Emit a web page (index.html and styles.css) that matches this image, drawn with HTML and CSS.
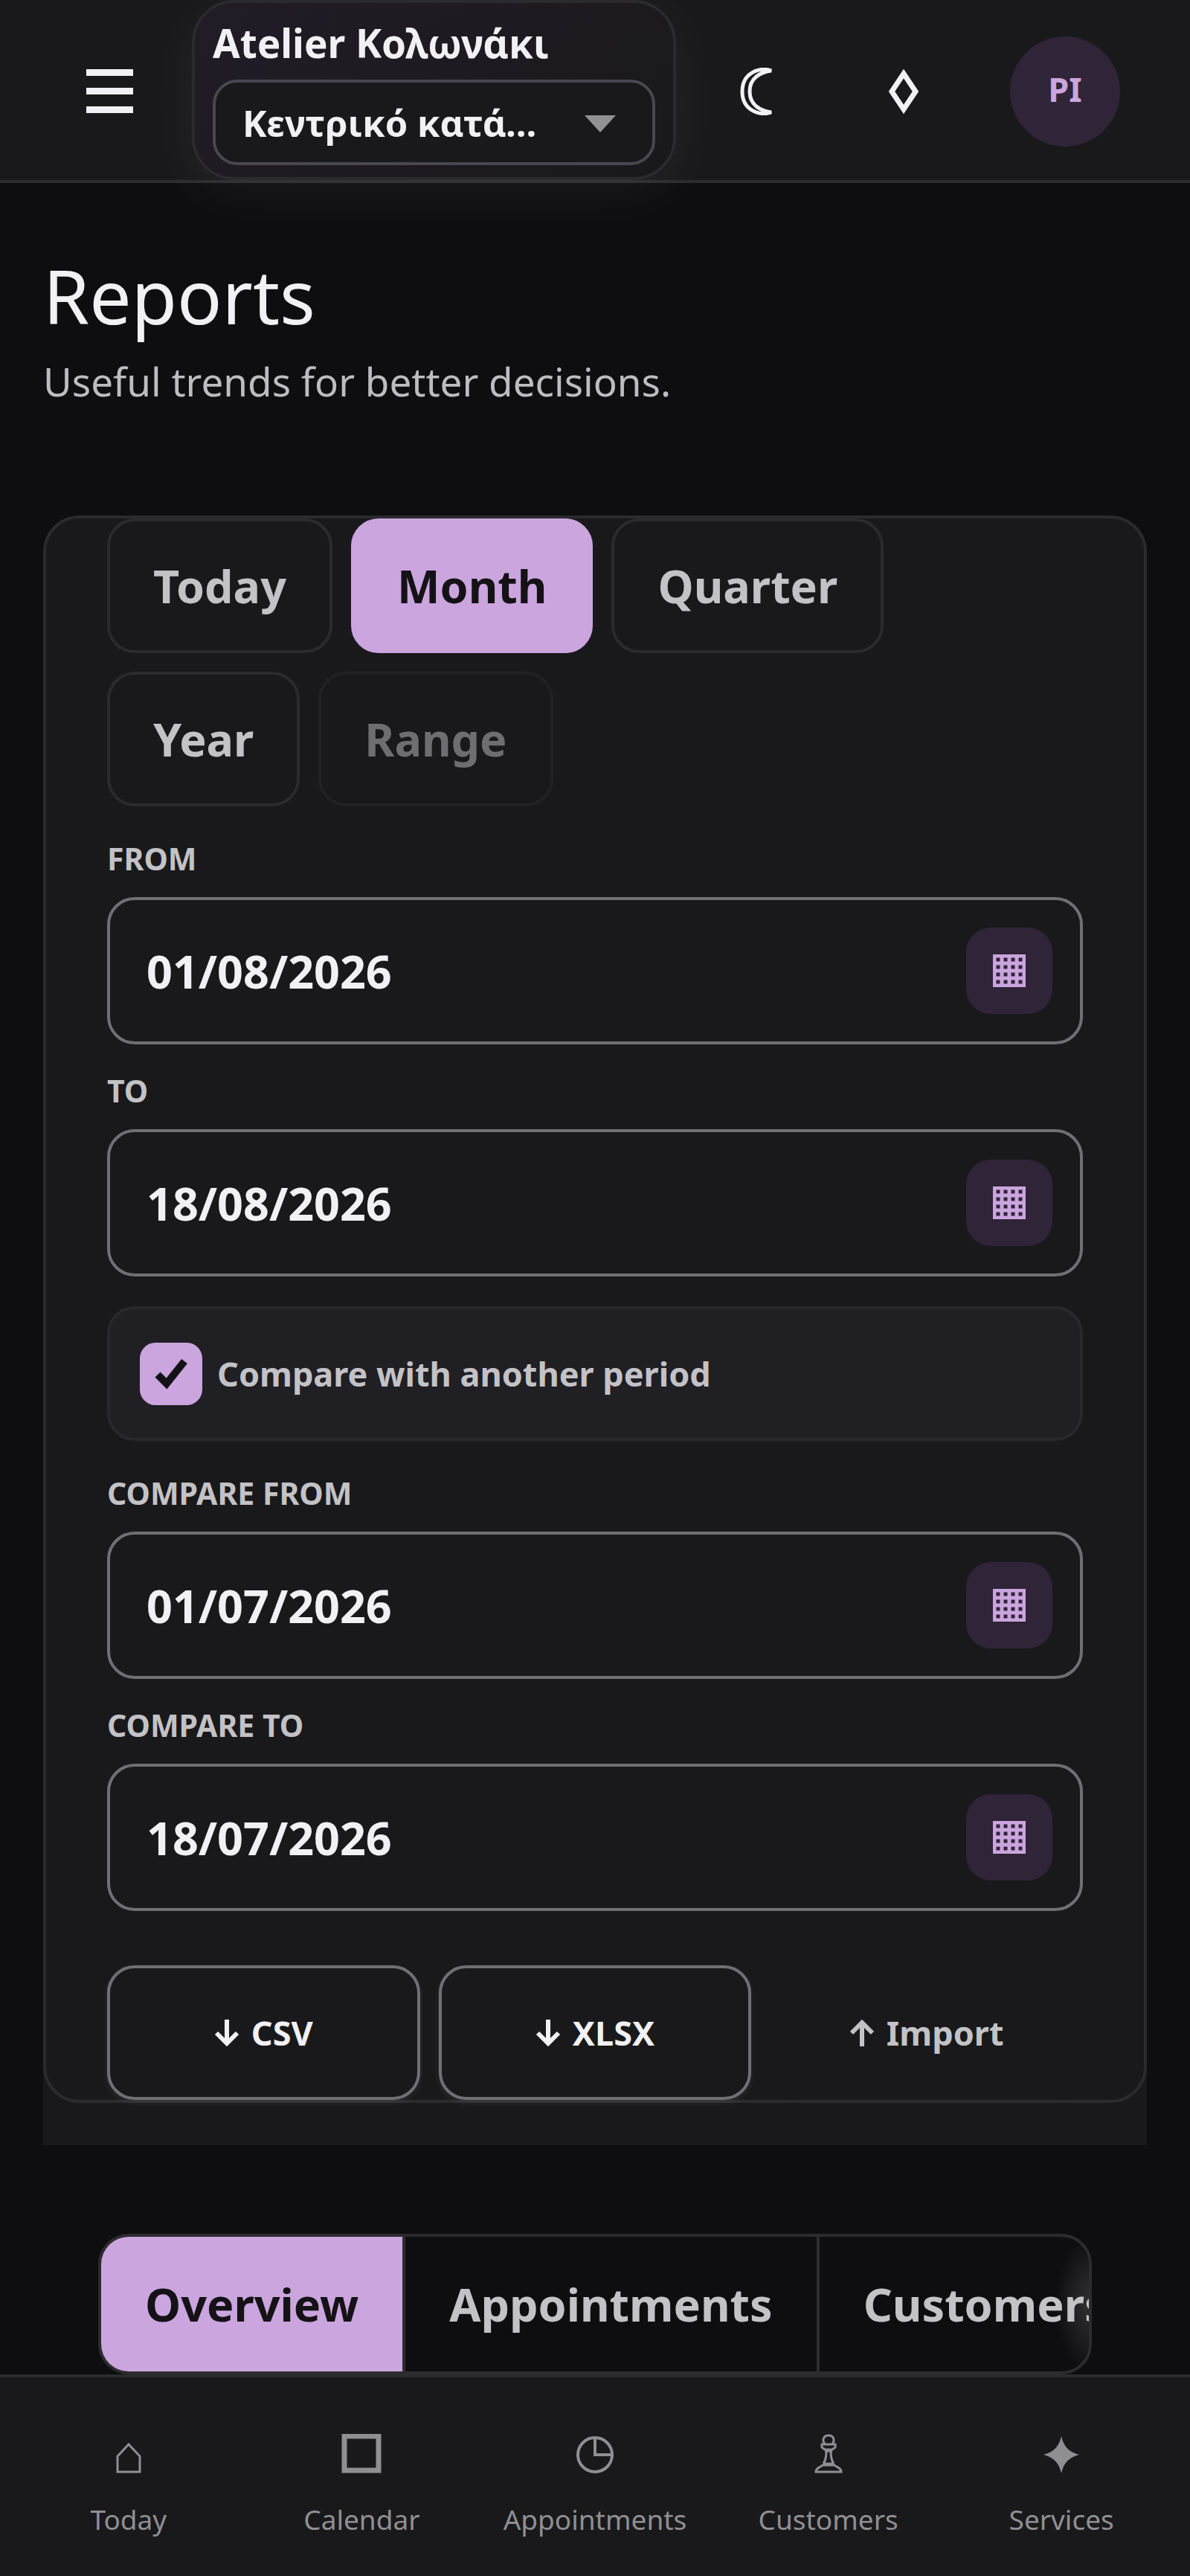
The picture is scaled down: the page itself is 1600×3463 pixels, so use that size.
FILE: index.html
```html
<!DOCTYPE html>
<html lang="en">
<head>
    <meta charset="UTF-8" />
    <meta name="viewport" content="width=device-width, initial-scale=1.0" />
    <title>Reports</title>
    <link rel="stylesheet" href="styles.css">
</head>
<body>
    <header class="topbar">
        <button type="button" class="icon-btn menu-btn" aria-label="Menu">
            <svg width="64" height="62" viewBox="0 0 64 62" fill="#f1f0f4">
                <rect x="0" y="1" width="63" height="9" />
                <rect x="0" y="26" width="63" height="9" />
                <rect x="0" y="51" width="63" height="9" />
            </svg>
        </button>

        <div class="shop">
            <label for="branch" class="shop-name">Atelier Κολωνάκι</label>
            <div class="shop-select">
                <select id="branch" name="branch">
                    <option>Κεντρικό κατά...</option>
                </select>
                <svg class="caret" width="42" height="24" viewBox="0 0 42 24"><path d="M0 0h42L21 23z" fill="#919193" /></svg>
            </div>
        </div>

        <button type="button" class="icon-btn" aria-label="Theme">
            <svg width="46" height="64" viewBox="0 0 46 64" fill="none" stroke="#f1f0f4" stroke-width="5">
                <path d="M43 4C28-1 4 6 4 32s24 33 39 28C28 58 14 50 14 32S28 6 43 4z" />
            </svg>
        </button>
        <button type="button" class="icon-btn" aria-label="Notifications">
            <svg width="44" height="62" viewBox="0 0 44 62" fill="none" stroke="#f1f0f4" stroke-width="7">
                <path d="M22 7L38 31 22 55 6 31z" />
            </svg>
        </button>
        <button type="button" class="avatar">PI</button>
    </header>

    <main class="page">
        <h1 class="title">Reports</h1>
        <p class="subtitle">Useful trends for better decisions.</p>

        <div class="panel-wrap">
            <form class="panel">
                <div class="periods">
                    <button type="button" class="period">Today</button>
                    <button type="button" class="period active">Month</button>
                    <button type="button" class="period">Quarter</button>
                    <button type="button" class="period">Year</button>
                    <button type="button" class="period" disabled>Range</button>
                </div>

                <div class="fields">
                    <div class="field">
                        <label for="from">FROM</label>
                        <div class="date">
                            <input type="text" id="from" value="01/08/2026">
                            <button type="button" aria-label="Open calendar"><svg width="44" height="44"><use href="#grid" /></svg></button>
                        </div>
                    </div>
                    <div class="field">
                        <label for="to">TO</label>
                        <div class="date">
                            <input type="text" id="to" value="18/08/2026">
                            <button type="button" aria-label="Open calendar"><svg width="44" height="44"><use href="#grid" /></svg></button>
                        </div>
                    </div>
                </div>

                <label class="compare" for="compare">
                    <span class="tick">
                        <input type="checkbox" id="compare" checked>
                        <svg width="84" height="84" viewBox="0 0 84 84" fill="none" stroke="#141216" stroke-width="10"><path d="M24 43l12 12 24-30" /></svg>
                    </span>
                    Compare with another period
                </label>

                <div class="fields">
                    <div class="field">
                        <label for="cfrom">COMPARE FROM</label>
                        <div class="date">
                            <input type="text" id="cfrom" value="01/07/2026">
                            <button type="button" aria-label="Open calendar"><svg width="44" height="44"><use href="#grid" /></svg></button>
                        </div>
                    </div>
                    <div class="field">
                        <label for="cto">COMPARE TO</label>
                        <div class="date">
                            <input type="text" id="cto" value="18/07/2026">
                            <button type="button" aria-label="Open calendar"><svg width="44" height="44"><use href="#grid" /></svg></button>
                        </div>
                    </div>
                </div>

                <div class="actions">
                    <button type="button" class="action">
                        <svg width="34" height="36" viewBox="0 0 34 36"><use href="#arrow" /></svg>CSV
                    </button>
                    <button type="button" class="action">
                        <svg width="34" height="36" viewBox="0 0 34 36"><use href="#arrow" /></svg>XLSX
                    </button>
                    <button type="button" class="action plain">
                        <svg width="34" height="36" viewBox="0 0 34 36"><use href="#arrow" transform="rotate(180 17 18)" /></svg>Import
                    </button>
                </div>
            </form>
        </div>

        <div class="tabs">
            <button type="button" class="tab active">Overview</button>
            <button type="button" class="tab">Appointments</button>
            <button type="button" class="tab">Customers</button>
        </div>
    </main>

    <nav class="bottom">
        <a href="#today">
            <svg width="54" height="54" viewBox="0 0 54 54" fill="none" stroke="#8f8f93" stroke-width="3">
                <path d="M12 51V30L27 14l15 16v21z" />
            </svg>
            Today
        </a>
        <a href="#calendar">
            <svg width="54" height="54" viewBox="0 0 54 54" fill="none" stroke="#8f8f93" stroke-width="7">
                <rect x="4" y="3" width="46" height="46" />
            </svg>
            Calendar
        </a>
        <a href="#appointments">
            <svg width="54" height="54" viewBox="0 0 54 54" fill="none" stroke="#8f8f93" stroke-width="4">
                <circle cx="27" cy="28" r="23" />
                <path d="M27 5v23h23" />
            </svg>
            Appointments
        </a>
        <a href="#customers">
            <svg width="54" height="54" viewBox="0 0 54 54" fill="none" stroke="#8f8f93" stroke-width="3">
                <path d="M22 13c-4-4-2-11 5-11s9 7 5 11" />
                <path d="M18 14h18v4l-4 3H22l-4-3zM22 23h10M24 23c0 9-1 13-4 17M30 23c0 9 1 13 4 17M20 40h14M10 51c0-6 6-6 9-9h16c3 3 9 3 9 9z" />
            </svg>
            Customers
        </a>
        <a href="#services">
            <svg width="54" height="54" viewBox="0 0 54 54" fill="#8f8f93">
                <path d="M27 3c3 13 9 21 24 25-15 4-21 12-24 25-3-13-9-21-24-25C18 24 24 16 27 3z" />
            </svg>
            Services
        </a>
    </nav>

    <svg class="defs" width="0" height="0" aria-hidden="true">
        <symbol id="grid" viewBox="0 0 44 44">
            <path d="M2 2h40v40H2zM2 12h40M2 22h40M2 32h40M12 2v40M22 2v40M32 2v40" fill="none" stroke="#cba5de" stroke-width="5" />
        </symbol>
        <symbol id="arrow" viewBox="0 0 34 36">
            <path d="M17 0v32M3 18l14 14 14-14" fill="none" stroke="currentColor" stroke-width="6" />
        </symbol>
    </svg>
</body>
</html>
```
FILE: styles.css
```css
* {
    box-sizing: border-box;
}
body {
    margin: 0;
    min-height: 100vh;
    display: flex;
    flex-direction: column;
    background-color: #0e0e10;
    color: #f1f0f4;
    font-family: "Noto Sans", "Open Sans", sans-serif;
}
button, input, select {
    font-family: inherit;
    color: inherit;
    margin: 0;
}
button {
    cursor: pointer;
}
svg {
    display: block;
    flex: none;
}
.defs {
    position: absolute;
}

/* top bar */
.topbar {
    display: flex;
    align-items: center;
    gap: 17px;
    padding: 0 94px 0 55px;
    background: #19191b;
    border-bottom: 4px solid #2c2c2f;
}
.icon-btn {
    width: 181px;
    height: 181px;
    display: flex;
    align-items: center;
    justify-content: center;
    background: none;
    border: none;
    margin-top: 4px;
    padding: 0;
}
.menu-btn {
    width: 186px;
}
.shop {
    flex: 1;
    min-width: 0;
    padding: 19px 24px 16px;
    border: 4px solid #2b2a2e;
    border-radius: 57px;
    background: linear-gradient(135deg, #211c26, #19191c);
    box-shadow: 0 16px 74px rgba(255, 255, 255, 0.06);
}
.shop-name {
    display: block;
    font-size: 53px;
    line-height: 70px;
    font-weight: bold;
    margin-bottom: 14px;
    white-space: nowrap;
}
.shop-select {
    position: relative;
}
.shop-select select {
    display: block;
    width: 100%;
    height: 115px;
    padding: 0 120px 0 36px;
    appearance: none;
    background: #19191b;
    border: 4px solid #49474f;
    border-radius: 33px;
    font-size: 49px;
    font-weight: bold;
}
.caret {
    position: absolute;
    right: 53px;
    top: 48px;
    pointer-events: none;
}
.avatar {
    width: 148px;
    height: 148px;
    margin: 4px 0 0 36px;
    padding: 0 0 8px;
    border: none;
    border-radius: 50%;
    background: #302438;
    color: #cba5de;
    font-size: 45px;
    font-weight: bold;
}

/* page */
.page {
    flex: 1;
    padding: 91px 58px 0;
}
.title {
    margin: 0 0 20px;
    font-size: 100px;
    line-height: 120px;
    font-weight: normal;
}
.subtitle {
    margin: 0 0 144px;
    font-size: 53px;
    line-height: 72px;
    color: #bdbcc0;
}
.panel-wrap {
    background: #19191b;
    border-radius: 49px 49px 0 0;
    padding-bottom: 57px;
}
.panel {
    border: 4px solid #2b2b2e;
    border-radius: 49px;
    padding: 0 82px;
}
.periods {
    display: flex;
    flex-wrap: wrap;
    gap: 25px;
    padding-right: 200px;
    margin-bottom: 42px;
}
.period {
    height: 181px;
    padding: 0 58px;
    background: #19191b;
    border: 4px solid #2b2b2e;
    border-radius: 37px;
    font-size: 61px;
    font-weight: bold;
    color: #c3c2c6;
}
.period.active {
    background: #cba5de;
    border-color: #cba5de;
    color: #141216;
}
.period:disabled {
    opacity: 0.5;
}

.fields {
    display: flex;
    flex-direction: column;
    gap: 34px;
}
.field label {
    display: block;
    margin-bottom: 24px;
    font-size: 41px;
    line-height: 56px;
    font-weight: bold;
    color: #c3c2c6;
}
.date {
    display: flex;
    align-items: center;
    height: 198px;
    padding: 0 37px 0 49px;
    border: 4px solid #707074;
    border-radius: 37px;
}
.date input {
    flex: 1;
    min-width: 0;
    padding: 0;
    border: none;
    background: none;
    font-size: 61px;
    font-weight: bold;
}
.date button {
    width: 116px;
    height: 116px;
    display: flex;
    align-items: center;
    justify-content: center;
    padding: 0;
    border: none;
    border-radius: 33px;
    background: #302438;
}

.compare {
    display: flex;
    align-items: center;
    gap: 20px;
    height: 181px;
    margin: 40px 0 42px;
    padding: 0 40px;
    border: 4px solid #29292c;
    border-radius: 37px;
    background: #201f24;
    color: #c3c2c6;
    font-size: 45px;
    font-weight: bold;
}
.tick {
    position: relative;
}
.tick input {
    display: block;
    width: 84px;
    height: 84px;
    margin: 0;
    appearance: none;
    border-radius: 21px;
    background: #cba5de;
}
.tick svg {
    position: absolute;
    top: 0;
    left: 0;
    pointer-events: none;
}

.actions {
    display: grid;
    grid-template-columns: repeat(3, 1fr);
    gap: 25px;
    margin-top: 73px;
}
.action {
    height: 181px;
    display: flex;
    align-items: center;
    justify-content: center;
    gap: 16px;
    padding: 0;
    background: #19191b;
    border: 4px solid #707074;
    border-radius: 37px;
    box-shadow: 0 4px 8px rgba(255, 255, 255, 0.08);
    font-size: 45px;
    font-weight: bold;
}
.action.plain {
    border-color: transparent;
    box-shadow: none;
    color: #c3c2c6;
}

.tabs {
    display: flex;
    height: 189px;
    margin: 119px 74px 0;
    border: 4px solid #2c2c2f;
    border-radius: 41px;
    overflow: hidden;
    background: radial-gradient(ellipse 45px 90px at right, #303033, #0e0e10);
}
.tab {
    flex: none;
    padding: 0 59px;
    background: none;
    border: none;
    border-right: 4px solid #2c2c2f;
    font-size: 61px;
    font-weight: bold;
    color: #c3c2c6;
}
.tab.active {
    background: #cba5de;
    color: #141216;
}

/* bottom navigation */
.bottom {
    display: grid;
    grid-template-columns: repeat(5, 1fr);
    height: 271px;
    padding: 76px 16px 0;
    background: #19191b;
    border-top: 4px solid #2c2c2f;
}
.bottom a {
    display: flex;
    flex-direction: column;
    align-items: center;
    gap: 36px;
    font-size: 37px;
    line-height: 50px;
    color: #8f8f93;
    text-decoration: none;
}
```
